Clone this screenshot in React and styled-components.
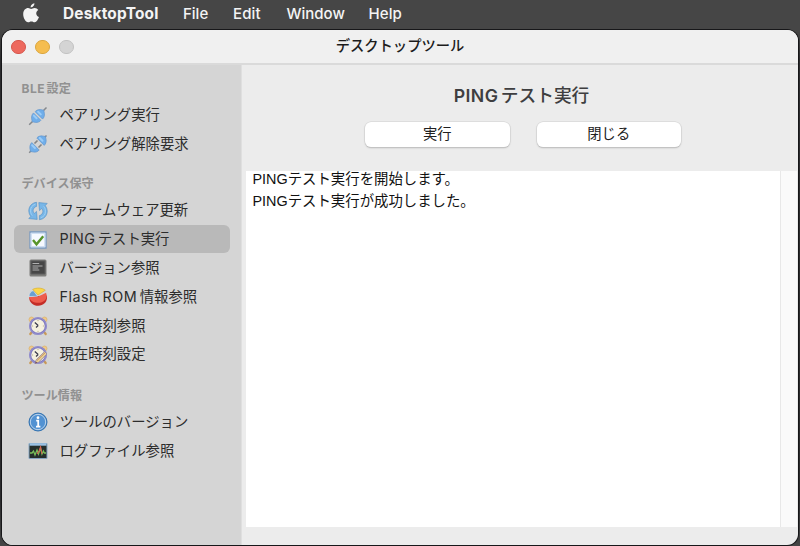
import React from 'react';
import styled, { createGlobalStyle } from 'styled-components';

const Global = createGlobalStyle`
  * { box-sizing: border-box; }
  html, body { margin: 0; height: 546px; overflow: hidden; background: #464646; }
  body { font-family: Inter, "Noto Sans CJK JP", sans-serif; }
`;

const Desktop = styled.div`
  width: 800px;
  height: 546px;
  display: flex;
  flex-direction: column;
  background: linear-gradient(#464646 0 30px, #2b2b2d 60px 500px, #454545 546px);
`;

const MenuBar = styled.header`
  height: 30px;
  flex: none;
  display: flex;
  padding-left: 22px;
  background: #464646;
  color: #f4f4f4;
  svg { margin: 3px 23px 0 0; flex: none; }
`;

const MenuItem = styled.span`
  width: ${(p) => p.$width}px;
  flex: none;
  font-size: ${(p) => (p.$bold ? 15.4 : 15)}px;
  line-height: 28px;
  font-weight: ${(p) => (p.$bold ? 700 : 450)};
  letter-spacing: ${(p) => p.$spacing || 0}px;
  white-space: nowrap;
`;

const Window = styled.main`
  width: 796px;
  height: 515px;
  margin-left: 2px;
  border-radius: 11px;
  overflow: hidden;
  display: flex;
  flex-direction: column;
  background: #ececec;
  box-shadow: 0 0 0 1px #171719;
`;

const TitleBar = styled.div`
  height: 35px;
  flex: none;
  display: grid;
  grid-template-columns: 200px 1fr 200px;
  background: #f0f0f0;
  border-bottom: 2px solid #dadada;
`;

const Lights = styled.div`
  display: flex;
  gap: 9.5px;
  padding: 9.5px 0 0 9px;
`;

const Light = styled.i`
  width: 14.5px;
  height: 14.5px;
  border-radius: 50%;
  background: ${(p) => p.$fill};
  border: 1px solid ${(p) => p.$edge};
`;

const WindowTitle = styled.div`
  text-align: center;
  font-size: 14.3px;
  line-height: 32px;
  font-weight: 500;
  color: #1c1c1c;
`;

const Body = styled.div`
  flex: 1;
  display: flex;
  min-height: 0;
`;

const Sidebar = styled.nav`
  width: 240px;
  flex: none;
  padding: 14px 12px 0;
  background: #d5d5d5;
  border-right: 1px solid #dfdfdf;
`;

const Group = styled.section`
  height: ${(p) => p.$height}px;
`;

const GroupTitle = styled.h2`
  margin: 0;
  height: 21.6px;
  padding-left: 7.5px;
  font-size: 12.1px;
  line-height: 20px;
  font-weight: 600;
  color: #919191;
`;

const Row = styled.div`
  height: 28.8px;
  width: 215.5px;
  display: flex;
  align-items: center;
  gap: 11.5px;
  padding: 1.2px 0 0 14px;
  border-radius: 6px;
  background: ${(p) => (p.$selected ? '#b9b9b9' : 'transparent')};
  color: #2c2c2c;
  font-size: 14.35px;
  line-height: 28.8px;
  white-space: nowrap;
  svg { flex: none; }
`;

const Latin = styled.span`
  font-weight: ${(p) => p.$weight || 'inherit'};
  letter-spacing: ${(p) => p.$spacing || 0}px;
  margin-right: ${(p) => p.$gap || 0}px;
`;

const Content = styled.section`
  flex: 1;
  display: flex;
  flex-direction: column;
  padding: 16px 1px 18px 4px;
`;

const Heading = styled.h1`
  margin: 0;
  height: 41px;
  text-align: center;
  font-size: 17.7px;
  line-height: 29px;
  font-weight: 500;
  color: #3e3e40;
`;

const Buttons = styled.div`
  display: flex;
  gap: 27px;
  padding-left: 119px;
  height: 49.4px;
`;

const Button = styled.button`
  width: 144.5px;
  height: 25px;
  padding: 0 0 2px;
  border: 0;
  border-radius: 6px;
  background: #fff;
  box-shadow: 0 0 0 0.5px #cfcfcf, 0 1px 1.5px #aaa;
  font: 400 14.3px/22px Inter, "Noto Sans CJK JP", sans-serif;
  color: #202020;
`;

const LogPane = styled.div`
  flex: 1;
  display: grid;
  grid-template-columns: 1fr 17px;
  background: #fff;
`;

const LogText = styled.div`
  padding: 0 0 0 6.5px;
  font-family: "Liberation Sans", "Noto Sans CJK JP", sans-serif;
  font-size: 14.4px;
  line-height: 21.5px;
  color: #111;
  p { margin: 0; transform: translateY(-2px); }
`;

const Track = styled.div`
  background: #fafafa;
  border-left: 1px solid #e8e8e8;
`;

const Icon = ({ children }) => (
  <svg width="20" height="20" viewBox="0 0 20 20" fill="none">{children}</svg>
);

const Apple = () => (
  <svg width="18" height="21" viewBox="0 0 18 21" fill="#f4f4f4">
    <path d="M12.4 .3c.2 2-1.6 4.2-3.7 4.2C8.4 2.6 10.3 .5 12.4 .3zM9.1 5.900c.9 0 1.900-1 3.500-1 1.500 0 2.900.8 3.700 2-3.100 1.800-2.500 6 .7 7.200-.9 2.400-2.400 5.200-4.300 5.200-1.300 0-1.700-.8-3.300-.8s-2.100.8-3.300.8C3.700 19.400 1.200 15 1.200 11.300c0-4 2.500-6.200 4.900-6.200 1.300 0 2.300.8 3 .8z" />
  </svg>
);

const Plug = ({ apart }) => {
  const d = apart ? 1.1 : -0.6;
  return (
    <Icon>
      <path d="M1.200 18.800L4.500 15.500M15.500 4.500L18.500 1.500" stroke="#85898d" strokeWidth="1.500" />
      {apart && <path d="M6.500 9.500l3-3M10.500 13.500l3-3" stroke="#858585" strokeWidth="1.600" />}
      <g stroke="#5c91c9" strokeWidth=".6" fill="#70aeea">
        <g transform={`translate(${-d} ${d})`}>
          <path d="M4.900 7.500L12.300 14.900C11.200 16.500 9 17.300 6.800 17L3.600 16.400 3 13.200C2.700 11 3.400 8.800 4.900 7.500z" />
          <path d="M5.300 10.200l2.700 2.700" stroke="#9accf8" strokeWidth="2" strokeLinecap="round" />
        </g>
        <g transform={`translate(${d} ${-d})`}>
          <path d="M7.700 5.100L15.100 12.500C16.600 11.200 17.300 9 17 6.800L16.400 3.600 13.200 3C11 2.700 8.900 3.600 7.700 5.100z" />
          <path d="M10.700 5.100l2.700 2.700" stroke="#9accf8" strokeWidth="2" strokeLinecap="round" />
        </g>
      </g>
    </Icon>
  );
};

const Refresh = () => (
  <Icon>
    <g fill="#78b6e7" stroke="#508fc4" strokeWidth=".6">
      <path d="M8.600 1.300C4 1.700.7 5.500.8 9.900c.1 2.200.8 4 2 5.400L.8 17.600l8.400.8-.7-8-2.100 2C5.500 11.500 5.100 10.800 5.100 9.700c0-2.100 1.400-3.800 3.500-4.300z" />
      <path d="M11.400 18.700c4.600-.4 7.900-4.200 7.800-8.600-.1-2.200-.8-4-2-5.400l2-2.300-8.400-.8.7 8 2.100-2c.9.900 1.300 1.600 1.300 2.700 0 2.100-1.400 3.800-3.500 4.300z" />
    </g>
    <path d="M7.300 3.300C4 4.300 2.500 6.600 2.600 9.900c0 1.800.5 3.200 1.700 4.600M12.700 16.700c3.300-1 4.800-3.300 4.700-6.600 0-1.800-.5-3.200-1.700-4.600" stroke="#a0d0f4" strokeWidth="1" />
  </Icon>
);

const Check = () => (
  <Icon>
    <path d="M2 2h16v16H2z" fill="#f6f9ff" stroke="#799ac1" strokeWidth="1.300" />
    <path d="M3.300 3.300h13.400v13.400H3.300z" stroke="#cfdef2" strokeWidth="1.200" />
    <path d="M5 10.100l3.500 4.200 6.700-8" stroke="#57942b" strokeWidth="2.400" />
  </Icon>
);

const Terminal = () => (
  <Icon>
    <rect x="1.500" y="1.500" width="17" height="17" rx="1.500" fill="#7d7d7a" />
    <path d="M3 3h14v13H3z" fill="#464646" stroke="#5c5c5c" />
    <path d="M4.500 5.500h6.700M4.500 8h10M4.500 10h5.800M4.500 12h6.800" stroke="#bcbcbc" strokeWidth=".9" />
  </Icon>
);

const Pie = () => (
  <Icon>
    <path d="M1.200 10.500c0 5 4 8.300 9 8.300 5.200 0 8.800-3.500 8.800-8.200l-.2-2.100L9.800 9z" fill="#c42d27" />
    <path d="M10 9.800L18 5.700C20.200 11 16.500 15.800 10.500 15.800 5.500 15.800 1.600 13.200 1.100 9.900z" fill="#ee5c4c" />
    <path d="M9.600 9.300L5.300 3.600C2.300 4.600.9 7.200 1.100 9.500z" fill="#6a9fd0" stroke="#dce7f0" strokeWidth=".5" />
    <path d="M10 8L4.700 2.400C8.200.5 14.200.5 17.300 3.300z" fill="#fbd64b" stroke="#d4a927" strokeWidth=".6" />
  </Icon>
);

const Clock = ({ edit }) => (
  <Icon>
    <path d="M4.300 15.500L2.300 18M15.700 15.500l2 2.500" stroke="#c99a58" strokeWidth="2.300" strokeLinecap="round" />
    <circle cx="3.500" cy="3.500" r="2.500" fill="#f0ca87" stroke="#d6ab62" strokeWidth=".6" />
    <circle cx="16.500" cy="3.500" r="2.500" fill="#f0ca87" stroke="#d6ab62" strokeWidth=".6" />
    <circle cx="10" cy="10" r="7.900" fill="#f5f1df" stroke="#827dc2" strokeWidth="2.300" />
    <circle cx="10" cy="10" r="8.300" stroke="#aaa6da" strokeWidth=".5" />
    <path d="M10 4.100v1M10 14.900v1M4.100 10h1M14.900 10h1" stroke="#b4aa85" />
    <path d="M10.200 9.500L6.800 6.500M10.200 9.500L8 11.500" stroke="#39384b" strokeWidth="1.200" />
    {edit && (
      <>
        <path d="M7.200 18.400L8.100 14.800 16.600 6.600 19 8.900 10.600 17.200z" fill="#ecd391" stroke="#91819e" strokeWidth=".8" />
        <path d="M9 15.500l8-7.700" stroke="#c28d63" />
        <path d="M7.200 18.400l.6-2 1.400 1.300z" fill="#6f4353" />
      </>
    )}
  </Icon>
);

const Info = () => (
  <Icon>
    <circle cx="10" cy="10" r="9" fill="#3e7ebd" stroke="#3474b2" />
    <circle cx="10" cy="10" r="7.700" fill="#5292d2" stroke="#cbdef0" strokeWidth=".9" />
    <circle cx="10" cy="5.700" r="1.400" fill="#fff" />
    <path d="M8.200 8.600H10.200v5.800M8 14.600h4.400" stroke="#fff" strokeWidth="1.800" />
  </Icon>
);

const Chart = () => (
  <Icon>
    <path d="M1 2.500h18v15H1z" fill="#252e2b" stroke="#86a5c1" />
    <path d="M1.500 3.500h17" stroke="#9bc2e5" strokeWidth="2.400" />
    <path d="M2 12h2l1.500-2 1.500 4 2-5 1.500 4 2-6 1.500 6 1.400-3 1 2H18" stroke="#78be5a" strokeWidth="1.300" />
    <path d="M9 13l2-3 1.600-4 1.400 7" stroke="#d66050" strokeWidth="1.100" />
  </Icon>
);

export default function App() {
  return (
    <Desktop>
      <Global />
      <MenuBar>
        <Apple />
        <MenuItem $width={120} $bold $spacing={0.2}>DesktopTool</MenuItem>
        <MenuItem $width={50}>File</MenuItem>
        <MenuItem $width={53.5} $spacing={0.15}>Edit</MenuItem>
        <MenuItem $width={82}>Window</MenuItem>
        <MenuItem $width={50} $spacing={0.1}>Help</MenuItem>
      </MenuBar>
      <Window>
        <TitleBar>
          <Lights>
            <Light $fill="#ed695e" $edge="#d5564c" />
            <Light $fill="#f5bd4f" $edge="#daa53e" />
            <Light $fill="#d4d4d4" $edge="#c2c2c2" />
          </Lights>
          <WindowTitle>デスクトップツール</WindowTitle>
        </TitleBar>
        <Body>
          <Sidebar>
            <Group $height={95.2}>
              <GroupTitle><Latin $gap={1.5} $spacing={0.45} $weight={700}>BLE</Latin>設定</GroupTitle>
              <Row><Plug />ペアリング実行</Row>
              <Row><Plug apart />ペアリング解除要求</Row>
            </Group>
            <Group $height={211.7}>
              <GroupTitle>デバイス保守</GroupTitle>
              <Row><Refresh />ファームウェア更新</Row>
              <Row $selected><Check /><span><Latin $gap={2.5} $spacing={0.3}>PING</Latin>テスト実行</span></Row>
              <Row><Terminal />バージョン参照</Row>
              <Row><Pie /><span><Latin $gap={2.5} $spacing={0.5}>Flash ROM</Latin>情報参照</span></Row>
              <Row><Clock />現在時刻参照</Row>
              <Row><Clock edit />現在時刻設定</Row>
            </Group>
            <Group $height={80}>
              <GroupTitle>ツール情報</GroupTitle>
              <Row><Info />ツールのバージョン</Row>
              <Row><Chart />ログファイル参照</Row>
            </Group>
          </Sidebar>
          <Content>
            <Heading><Latin $gap={2.5} $spacing={0.4} $weight={600}>PING</Latin>テスト実行</Heading>
            <Buttons>
              <Button>実行</Button>
              <Button>閉じる</Button>
            </Buttons>
            <LogPane>
              <LogText>
                <p>PINGテスト実行を開始します。</p>
                <p>PINGテスト実行が成功しました。</p>
              </LogText>
              <Track />
            </LogPane>
          </Content>
        </Body>
      </Window>
    </Desktop>
  );
}
